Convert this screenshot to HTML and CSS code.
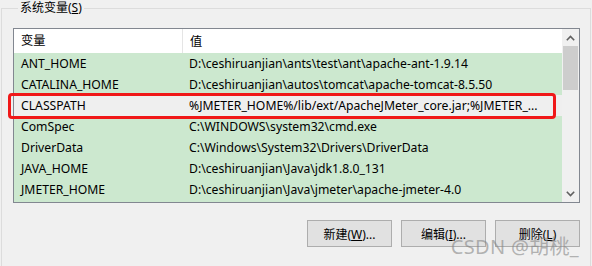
FILE: index.html
```html
<!DOCTYPE html>
<html lang="zh-CN">
<head>
<meta charset="utf-8">
<title>系统变量</title>
<link rel="stylesheet" href="styles.css">
</head>
<body>
<fieldset class="group">
  <legend class="group-title">系统变量(<u>S</u>)</legend>
  <div class="listbox">
    <div class="list-main">
      <div class="list-header">
        <div class="cell c1 hcell">变量</div>
        <div class="cell c2">值</div>
      </div>
      <div class="list-rows">
        <div class="row"><div class="cell c1">ANT_HOME</div><div class="cell c2">D:\ceshiruanjian\ants\test\ant\apache-ant-1.9.14</div></div>
        <div class="row"><div class="cell c1">CATALINA_HOME</div><div class="cell c2">D:\ceshiruanjian\autos\tomcat\apache-tomcat-8.5.50</div></div>
        <div class="row selected"><div class="cell c1">CLASSPATH</div><div class="cell c2">%JMETER_HOME%/lib/ext/ApacheJMeter_core.jar;%JMETER_...</div></div>
        <div class="row"><div class="cell c1">ComSpec</div><div class="cell c2">C:\WINDOWS\system32\cmd.exe</div></div>
        <div class="row"><div class="cell c1">DriverData</div><div class="cell c2">C:\Windows\System32\Drivers\DriverData</div></div>
        <div class="row"><div class="cell c1">JAVA_HOME</div><div class="cell c2">D:\ceshiruanjian\Java\jdk1.8.0_131</div></div>
        <div class="row"><div class="cell c1">JMETER_HOME</div><div class="cell c2">D:\ceshiruanjian\Java\jmeter\apache-jmeter-4.0</div></div>
      </div>
    </div>
    <div class="scrollbar">
      <div class="sb-btn">
        <svg width="9" height="6" viewBox="0 0 9 6"><path d="M0.8 5.2 L4.5 1.5 L8.2 5.2" fill="none" stroke="#606060" stroke-width="1.6"/></svg>
      </div>
      <div class="sb-thumb"></div>
      <div class="sb-track"></div>
      <div class="sb-btn">
        <svg width="9" height="6" viewBox="0 0 9 6"><path d="M0.8 0.8 L4.5 4.5 L8.2 0.8" fill="none" stroke="#606060" stroke-width="1.6"/></svg>
      </div>
    </div>
    <div class="highlight"></div>
  </div>
  <div class="buttons">
    <button class="btn" type="button">新建(<u>W</u>)...</button>
    <button class="btn" type="button">编辑(<u>I</u>)...</button>
    <button class="btn" type="button">删除(<u>L</u>)</button>
  </div>
  <div class="watermark">CSDN @胡桃_</div>
</fieldset>
</body>
</html>
```

FILE: styles.css
```css
html, body {
  margin: 0;
  padding: 0;
  background: #f0f0f0;
  width: 592px;
  height: 266px;
  overflow: hidden;
  font-family: "Noto Sans", "Noto Sans CJK SC", sans-serif;
  font-size: 12px;
  color: #000;
}

.group {
  position: relative;
  margin: 0 1px;
  padding: 0 10px 16px 11px;
  border: 1px solid #dcdcdc;
  min-inline-size: 0;
  height: 249px;
  box-sizing: content-box;
}

.group-title {
  margin-left: 5px;
  padding: 0 2px;
  line-height: 16px;
  height: 16px;
  font-size: 12px;
}

.listbox {
  position: relative;
  margin-top: 12px;
  height: 173px;
  border: 1px solid #828790;
  display: flex;
  background: #cce8cf;
}

.list-main {
  flex: 1;
  overflow: hidden;
}

.list-header {
  display: flex;
  height: 24px;
  background: #fff;
  align-items: center;
}

.cell {
  white-space: nowrap;
  overflow: hidden;
  line-height: 21px;
  font-size: 12.2px;
}

.c1 {
  width: 161px;
  padding-left: 7px;
  flex: none;
}

.hcell {
  border-right: 1px solid #e5e5e5;
  height: 24px;
  line-height: 24px;
}

.c2 {
  padding-left: 7px;
  flex: 1;
}

.row {
  display: flex;
  height: 21px;
  background: #cce8cf;
}

.row.selected {
  background: #efefef;
}

.scrollbar {
  width: 17px;
  flex: none;
  display: flex;
  flex-direction: column;
  background: #f0f0f0;
}

.sb-btn {
  height: 17px;
  display: flex;
  align-items: center;
  justify-content: center;
}

.sb-thumb {
  height: 44px;
  margin: 0 1px;
  background: #cdcdcd;
}

.sb-track {
  flex: 1;
}

.highlight {
  position: absolute;
  left: -6px;
  top: 64px;
  width: 542px;
  height: 20px;
  border: 3px solid #f01818;
  border-radius: 4px;
}

.buttons {
  display: flex;
  justify-content: flex-end;
  gap: 9px;
  margin-top: 17px;
}

.btn {
  width: 85px;
  height: 27px;
  background: #e1e1e1;
  border: 1px solid #adadad;
  font-family: "Noto Sans", "Noto Sans CJK SC", sans-serif;
  font-size: 12px;
  color: #000;
  padding: 0;
}

.watermark {
  position: absolute;
  right: 11px;
  bottom: 6px;
  font-family: "Noto Sans", "Noto Sans CJK SC", sans-serif;
  font-size: 20px;
  color: rgba(135, 135, 135, 0.6);
  letter-spacing: 0.3px;
}
```
